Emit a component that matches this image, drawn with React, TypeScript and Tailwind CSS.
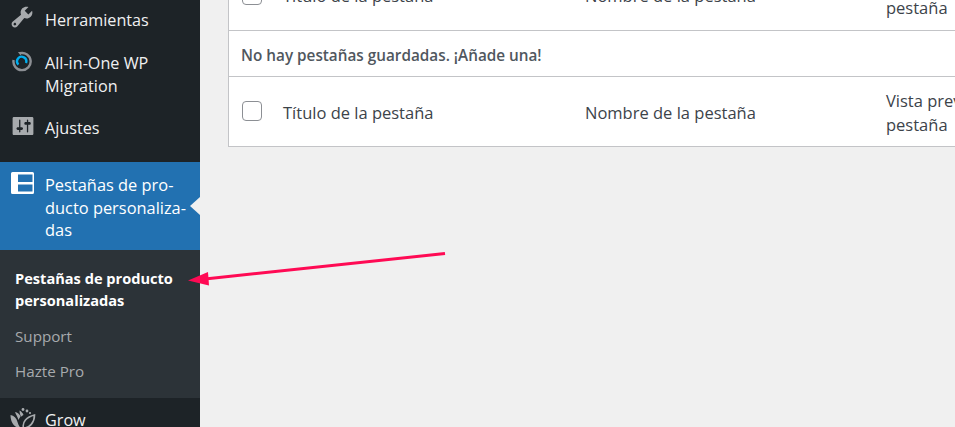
import React from 'react';

const font = { fontFamily: '"Open Sans", "Noto Sans", sans-serif' };

const WrenchIcon = () => (
    <svg viewBox="0 0 20 20" className="w-[26px] h-[26px] -mt-[5px] -ml-[2px] fill-[#a7aaad]">
        <path d="M16.68 9.77c-1.34 1.34-3.3 1.67-4.95.99l-5.41 6.52c-.99.99-2.59.99-3.58 0s-.99-2.59 0-3.58l6.52-5.41c-.68-1.65-.35-3.61.99-4.95 1.28-1.28 3.12-1.62 4.72-1.06l-2.89 2.89 2.82 2.82 2.86-2.87c.53 1.58.18 3.39-1.08 4.65zM3.81 16.21c.4.39 1.04.39 1.43 0 .4-.4.4-1.04 0-1.43-.39-.4-1.03-.4-1.43 0-.39.39-.39 1.03 0 1.43z" />
    </svg>
);

const MigrationIcon = () => (
    <svg viewBox="0 0 22 22" className="w-[22px] h-[22px] fill-none">
        <path d="M9 2.200 A8.600 8.600 0 1 1 2.600 9" stroke="#8c8f94" strokeWidth="2.400" />
        <path d="M7 1 L11 1 L9.500 4.500 Z" fill="#8c8f94" />
        <path d="M7.400 13.600 A4.600 4.600 0 1 1 15 12" stroke="#00aeef" strokeWidth="2.400" />
    </svg>
);

const SettingsIcon = () => (
    <svg viewBox="0 0 20 20" className="w-[26px] h-[26px] -mt-[4px] -ml-[1px] fill-[#a7aaad]">
        <path d="M18 16V4c0-.55-.45-1-1-1H3c-.55 0-1 .45-1 1v12c0 .55.45 1 1 1h14c.55 0 1-.45 1-1zM8 11h1c.55 0 1 .45 1 1s-.45 1-1 1H8v1.500c0 .28-.22.5-.5.5s-.5-.22-.5-.5V13H6c-.55 0-1-.45-1-1s.45-1 1-1h1V5.500c0-.28.22-.5.5-.5s.5.22.5.5V11zm5-2h-1c-.55 0-1-.45-1-1s.45-1 1-1h1V5.500c0-.28.22-.5.5-.5s.5.22.5.5V7h1c.55 0 1 .45 1 1s-.45 1-1 1h-1v5.500c0 .28-.22.5-.5.5s-.5-.22-.5-.5V9z" />
    </svg>
);

const TabsIcon = () => (
    <svg viewBox="0 0 23 22" className="w-[23px] h-[22px] fill-white">
        <path
            fillRule="evenodd"
            d="M1.500 0h20A1.500 1.500 0 0 1 23 1.500v19a1.500 1.500 0 0 1-1.500 1.500h-20A1.500 1.500 0 0 1 0 20.500v-19A1.500 1.500 0 0 1 1.500 0zM7 2.500v7.500h14.500V2.500H7zm0 10v7h14.500v-7H7z"
        />
    </svg>
);

const GrowIcon = () => (
    <svg viewBox="0 0 26 22" className="w-[26px] h-[22px]">
        <g fill="#a7aaad">
            <path d="M.5 7c3.500.5 6 3 7 7 .5 2 1.500 4 3 6C5 20 .5 15 .5 7z" />
            <path d="M5 4c2.500.5 4.500 2 5.500 4.500-.8 1-1.500 2.200-2 3.500C7.500 9 6 6.500 5 4z" />
            <path d="M9.500 2.500c2 1 3.300 2.500 4 4.500-1 .5-1.700 1-2.500 1.800-.8-2-1.500-4-1.500-6.300z" />
            <circle cx="13" cy="1.500" r="1.400" />
            <circle cx="17" cy="3" r="1.400" />
            <circle cx="20" cy="5" r="1.100" />
        </g>
        <path d="M13.500 20c-1.500-6 3-11 11-13C24.500 14 20 20 13.500 20z" fill="none" stroke="#a7aaad" strokeWidth="1.600" />
    </svg>
);

const MenuItem = ({ icon, label, className }: { icon: React.ReactNode; label: React.ReactNode; className: string }) => (
    <div className={`flex items-start shrink-0 pl-[11px] pr-2 text-[16.200px] leading-[23px] text-[#f0f0f1] ${className}`}>
        <div className="w-[34px] shrink-0 flex">{icon}</div>
        <div>{label}</div>
    </div>
);

const Checkbox = () => (
    <div className="w-[20px] h-[20px] rounded-[4px] border border-[#8c8f94] bg-white"></div>
);

const TabRow = () => (
    <tr className="border-b border-[#c3c4c7] h-[70px] text-[16.500px] leading-[24px] text-[#3c434a]">
        <td className="w-[54px] pl-[13px] align-middle"><Checkbox /></td>
        <td className="w-[302px] pt-[3px] align-middle">Título de la pestaña</td>
        <td className="w-[301px] pt-[3px] align-middle">Nombre de la pestaña</td>
        <td className="w-[142px] pt-[3px] align-middle">Vista previa de la pestaña</td>
    </tr>
);

export default function App() {
    return (
        <div className="relative flex w-[955px] h-[427px] overflow-hidden bg-[#f0f0f0]" style={font}>
            {/* Sidebar */}
            <aside className="w-[200px] shrink-0 bg-[#1d2327] flex flex-col">
                <MenuItem icon={<WrenchIcon />} label="Herramientas" className="h-[41px] pt-[9px]" />
                <MenuItem
                    icon={<div className="-mt-[1px]"><MigrationIcon /></div>}
                    label={<>All-in-One WP<br />Migration</>}
                    className="h-[67px] pt-[11px]"
                />
                <MenuItem icon={<SettingsIcon />} label="Ajustes" className="h-[54px] pt-[9px]" />

                <div className="relative h-[88px] shrink-0 bg-[#2271b1] flex items-start pl-[11px] pt-[12px] text-[16.400px] leading-[22.500px] text-white">
                    <div className="w-[34px] shrink-0 -mt-[2px]"><TabsIcon /></div>
                    <div>Pestañas de pro-<br />ducto personaliza-<br />das</div>
                    <div className="absolute right-0 top-[35px] border-y-[9px] border-y-transparent border-r-[10px] border-r-[#f0f0f0]"></div>
                </div>

                <div className="h-[148px] shrink-0 bg-[#2c3338] pt-[17px] pl-[15px]">
                    <div className="font-bold text-white text-[14.600px] leading-[22px]">Pestañas de producto<br />personalizadas</div>
                    <div className="mt-[14px] text-[15.200px] leading-[22px] text-[#a7aaad]">Support</div>
                    <div className="mt-[13px] text-[15.200px] leading-[22px] text-[#a7aaad]">Hazte Pro</div>
                </div>

                <div className="flex items-start shrink-0 pl-[10px] pt-[11px] text-[16.200px] leading-[23px] text-[#f0f0f1]">
                    <div className="w-[35px] shrink-0 -mt-[1px]"><GrowIcon /></div>
                    <div>Grow</div>
                </div>
            </aside>

            {/* Table */}
            <main className="flex-1 min-w-0 pl-[28px] -mt-[41px]">
                <div className="w-[801px] bg-white border border-[#c3c4c7] border-b-0">
                    <table className="border-collapse table-fixed w-[799px]">
                        <tbody>
                            <TabRow />
                            <tr className="border-b border-[#c3c4c7] h-[46px]">
                                <td colSpan={4} className="pl-[12px] pt-[5px] text-[15.300px] font-semibold text-[#50575e]">
                                    No hay pestañas guardadas. ¡Añade una!
                                </td>
                            </tr>
                            <TabRow />
                        </tbody>
                    </table>
                </div>
            </main>

            {/* Annotation arrow */}
            <svg className="absolute left-0 top-0 w-[955px] h-[427px] pointer-events-none" viewBox="0 0 955 427">
                <path d="M445 253.500 L205 279" stroke="#ff0a54" strokeWidth="3" fill="none" />
                <path d="M188 280.500 L208 272 L209 285.500 Z" fill="#ff0a54" />
            </svg>
        </div>
    );
}
